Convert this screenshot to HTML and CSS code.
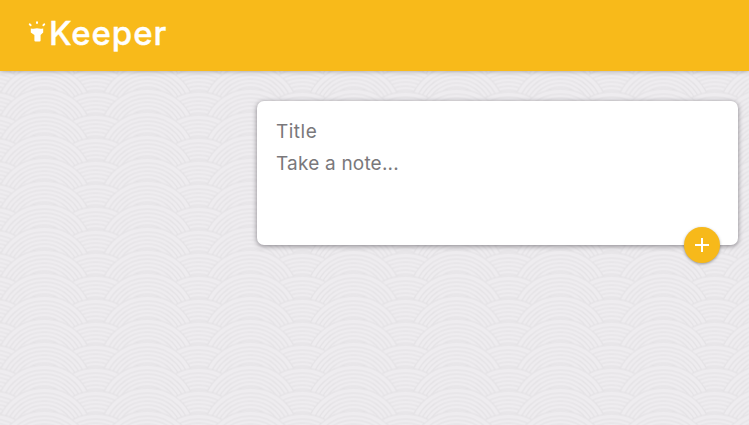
FILE: index.html
```html
<!DOCTYPE html>
<html lang="en">
<head>
<meta charset="utf-8">
<title>Keeper</title>
<link rel="stylesheet" href="styles.css">
</head>
<body>
<svg class="waves" aria-hidden="true">
  <defs>
    <g id="fan">
      <circle r="49" fill="#eeecef"/>
      <g fill="none" stroke="#e3e1e4" stroke-width="1.1">
        <circle r="48.5"/><circle r="43.5"/><circle r="39.5"/><circle r="35.5"/><circle r="31.5"/><circle r="27.5"/>
      </g>
    </g>
    <pattern id="seigaiha" width="103.2" height="23" patternUnits="userSpaceOnUse" patternTransform="translate(-7.5 341.5)">
      <g id="row">
        <use href="#fan" x="0" y="6"/><use href="#fan" x="103.2" y="6"/><use href="#fan" x="51.6" y="3"/>
      </g>
      <use href="#row" y="23"/>
      <use href="#row" y="46"/>
      <use href="#row" y="69"/>
    </pattern>
  </defs>
  <rect width="100%" height="100%" fill="url(#seigaiha)"/>
</svg>
<header class="header">
  <svg class="logo" viewBox="0 0 18 22" aria-hidden="true">
    <path d="M2.8 8.4Q6 9 9 8.2Q12 9 15.2 8.4V12.5L12.6 15V20.5Q12.6 21.5 11.6 21.5H7.4Q6.4 21.5 6.4 20.5V15L2.8 12.5Z"/>
    <path class="ray" d="M1.8 4.3L2.6 5.2M9 2.2V2.9M16.2 4.3L15.4 5.2"/>
  </svg>
  <h1 class="brand">Keeper</h1>
</header>
<main class="main">
  <form class="note">
    <div class="field title">Title</div>
    <div class="field content">Take a note...</div>
    <button class="add" type="button" aria-label="Add">
      <svg viewBox="0 0 16 16"><path d="M8 1V15M1 8H15"/></svg>
    </button>
  </form>
</main>
</body>
</html>
```
FILE: styles.css
```css
* { box-sizing: border-box; }
body { margin: 0; min-height: 425px; background: #eeecef; font-family: Inter, "Liberation Sans", sans-serif; overflow: hidden; }
.waves { position: absolute; inset: 0; width: 100%; height: 100%; z-index: -1; }
.header { display: flex; align-items: flex-start; height: 71px; padding: 0 28px; background: #f8ba1a; box-shadow: 0 0 5px rgba(0,0,0,.35); }
.logo { width: 18px; height: 22px; margin-top: 20px; fill: #fff; }
.logo .ray { fill: none; stroke: #fff; stroke-width: 2; stroke-linecap: round; }
.brand { margin: 12px 0 0 3px; color: #fff; font-size: 33px; line-height: 42px; font-weight: 500; letter-spacing: .9px; -webkit-text-stroke: .4px #fff; }
.main { padding: 30px 11px 0 257px; }
.note { position: relative; height: 144px; padding: 15px 19px; background: #fff; border-radius: 7px; box-shadow: 0 1px 5px rgba(60,55,65,.6); }
.field { height: 32px; line-height: 32px; font-size: 19px; color: #7a787b; }
.title { letter-spacing: .5px; }
.content { letter-spacing: .2px; }
.add { position: absolute; right: 18px; bottom: -18px; display: flex; align-items: center; justify-content: center; width: 36px; height: 36px; padding: 0; border: 0; border-radius: 50%; background: #f7b91a; box-shadow: 0 1px 3px rgba(0,0,0,.35); }
.add svg { width: 16px; height: 16px; fill: none; stroke: #fff; stroke-width: 2; }
```
